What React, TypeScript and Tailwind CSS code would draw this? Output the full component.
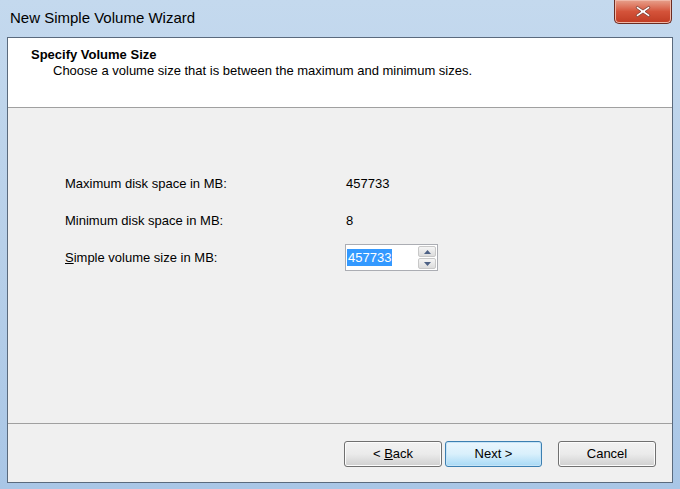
import React from 'react';

const font = { fontFamily: '"Liberation Sans", Arial, sans-serif' };

function WinButton({ label, accel, rest, focused, w }: { label?: string; accel?: string; rest?: string; focused?: boolean; w: string }) {
  return (
    <button
      className={`${w} h-[26px] rounded-[3px] border text-[13px] text-black ${
        focused
          ? 'border-[#3c7fb1] bg-gradient-to-b from-[#eaf6fd] via-[#d9f0fc] to-[#a7d9f5] shadow-[inset_0_0_0_1px_#c6e4f7]'
          : 'border-[#707070] bg-gradient-to-b from-[#f2f2f2] via-[#ebebeb] to-[#cfcfcf] shadow-[inset_0_0_0_1px_#fcfcfc]'
      }`}
    >
      {label}
      {accel && <span className="underline">{accel}</span>}
      {rest}
    </button>
  );
}

export default function App() {
  return (
    <div
      className="w-[680px] h-[489px] flex flex-col bg-gradient-to-b from-[#c4d9ee] via-[#b8d0e9] to-[#a9c6e6] overflow-hidden"
      style={font}
    >
      {/* Title bar */}
      <div className="h-[37px] flex items-start justify-between shrink-0">
        <div className="pl-[10px] pt-[8px] text-[15px] text-black leading-[20px]">New Simple Volume Wizard</div>
        <div className="mr-[8px] w-[58px] h-[24px] rounded-b-[5px] border border-t-0 border-[#6b2c22] bg-gradient-to-b from-[#e7a08c] via-[#d4533a] to-[#c03b22] flex items-center justify-center shadow-[inset_0_0_0_1px_#f0b8a8]">
          <svg width="16" height="13" viewBox="0 0 16 13">
            <path d="M2 1 L8 5 L14 1 L15 3 L10 6.5 L15 10 L14 12 L8 8 L2 12 L1 10 L6 6.5 L1 3 Z" fill="#ffffff" stroke="#7a3a2e" strokeWidth="0.8" />
          </svg>
        </div>
      </div>

      {/* Client */}
      <div className="mx-[7px] mb-[6px] flex-1 flex flex-col border border-[#5a6a7d] bg-[#f0f0f0]">
        {/* Header */}
        <div className="h-[70px] shrink-0 bg-white border-b border-[#a0a0a0] pl-[23px] pt-[9px]">
          <div className="text-[13px] font-bold text-black leading-[16px]">Specify Volume Size</div>
          <div className="pl-[22px] text-[13px] text-black leading-[16px]">
            Choose a volume size that is between the maximum and minimum sizes.
          </div>
        </div>

        {/* Body */}
        <div className="flex-1 pl-[57px] pt-[68px] text-[13px] text-black">
          <div className="flex items-center h-[16px]">
            <div className="w-[280px]">Maximum disk space in MB:</div>
            <div className="ml-[1px]">457733</div>
          </div>
          <div className="flex items-center h-[16px] mt-[21px]">
            <div className="w-[280px]">Minimum disk space in MB:</div>
            <div className="ml-[1px]">8</div>
          </div>
          <div className="flex items-center mt-[15px]">
            <div className="w-[280px]">
              <span className="underline">S</span>imple volume size in MB:
            </div>
            <div className="flex h-[27px] w-[93px] border border-[#abadb3] bg-white">
              <div className="flex-1 flex items-center pl-[1px]">
                <span className="bg-[#3399ff] text-white px-[1px] leading-[17px]">457733</span>
              </div>
              <div className="w-[18px] flex flex-col mr-[1px] my-[1px] gap-[1px]">
                <div className="flex-1 border border-[#c8c8c8] rounded-[2px] bg-gradient-to-b from-[#f5f5f5] to-[#dcdcdc] flex items-center justify-center">
                  <svg width="7" height="4" viewBox="0 0 7 4"><path d="M0 4 L3.5 0 L7 4 Z" fill="#4d6185" /></svg>
                </div>
                <div className="flex-1 border border-[#c8c8c8] rounded-[2px] bg-gradient-to-b from-[#f5f5f5] to-[#dcdcdc] flex items-center justify-center">
                  <svg width="7" height="4" viewBox="0 0 7 4"><path d="M0 0 L7 0 L3.5 4 Z" fill="#4d6185" /></svg>
                </div>
              </div>
            </div>
          </div>
        </div>

        {/* Footer */}
        <div className="h-[59px] shrink-0 border-t border-[#a0a0a0] flex items-start justify-end pr-[16px] pt-[17px]">
          <WinButton w="w-[98px]" label="< " accel="B" rest="ack" />
          <div className="ml-[3px]">
            <WinButton w="w-[97px]" label="Next >" focused />
          </div>
          <div className="ml-[16px]">
            <WinButton w="w-[98px]" label="Cancel" />
          </div>
        </div>
      </div>
    </div>
  );
}
